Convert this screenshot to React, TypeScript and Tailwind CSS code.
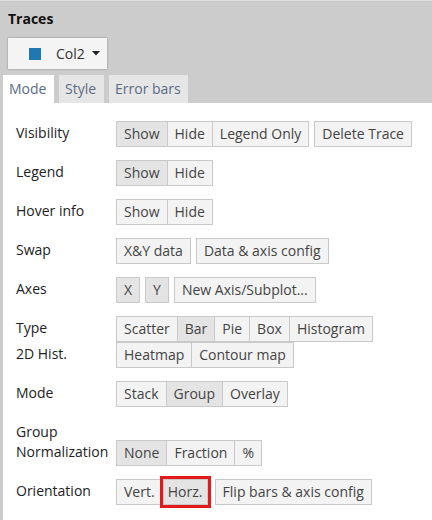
import React from "react";

type Btn = { t: string; active?: boolean };

const btnBase =
  "h-[26px] px-[7px] border border-[#c9c9c9] text-[14px] leading-[24px] text-[#444] whitespace-nowrap";

function Group({ items }: { items: Btn[] }) {
  return (
    <div className="flex">
      {items.map((b, i) => (
        <div
          key={b.t}
          className={`${btnBase} ${i > 0 ? "-ml-px" : ""} ${b.active ? "bg-[#e4e4e4]" : "bg-[#f3f3f3]"}`}
        >
          {b.t}
        </div>
      ))}
    </div>
  );
}

function Single({ t, active, className = "" }: Btn & { className?: string }) {
  return <div className={`${btnBase} ${active ? "bg-[#e4e4e4]" : "bg-[#f3f3f3]"} ${className}`}>{t}</div>;
}

function Row({ label, children, className = "" }: { label: React.ReactNode; children: React.ReactNode; className?: string }) {
  return (
    <div className={`flex items-start ${className}`}>
      <div className="w-[113px] shrink-0 pl-[13px] pt-[2px] text-[14px] leading-[20px] text-[#222]">{label}</div>
      <div className="flex items-start gap-[5px]">{children}</div>
    </div>
  );
}

export default function App() {
  return (
    <div className="w-[432px] h-[520px] bg-white overflow-hidden flex flex-col font-['Open_Sans',sans-serif]">
      <div className="border-t border-[#dedede] bg-[#cccccc] flex flex-col">
        <div className="h-[34px] flex items-center px-[8px] text-[14px] font-bold text-[#111]">Traces</div>
        <div className="mt-[3px] ml-[8px] w-[99px] h-[31px] bg-[#f4f4f4] shadow-[0_0_2px_rgba(0,0,0,0.35)] flex items-center">
          <div className="ml-[21px] w-[12px] h-[12px] bg-[#1f77b4]" />
          <span className="ml-[15px] text-[14px] text-[#333]">Col2</span>
          <svg className="ml-[7px]" width="8" height="5" viewBox="0 0 8 5">
            <polygon points="0,0 8,0 4,4.5" fill="#222" />
          </svg>
        </div>
        <div className="mt-[6px] ml-[3px] flex gap-[5px] h-[28px]">
          <div className="w-[51px] bg-white text-[14px] leading-[28px] pl-[6px] text-[#5b6b85]">Mode</div>
          <div className="w-[45px] bg-[#e6e6e6] text-[14px] leading-[28px] pl-[6px] text-[#5b6b85]">Style</div>
          <div className="w-[79px] bg-[#e6e6e6] text-[14px] leading-[28px] pl-[6px] text-[#5b6b85]">Error bars</div>
        </div>
      </div>
      <div className="flex-1 border-l-[3px] border-[#cccccc] pt-[18px] flex flex-col">
        <Row label="Visibility">
          <Group items={[{ t: "Show", active: true }, { t: "Hide" }, { t: "Legend Only" }]} />
          <Single t="Delete Trace" />
        </Row>
        <Row label="Legend" className="mt-[13px]">
          <Group items={[{ t: "Show", active: true }, { t: "Hide" }]} />
        </Row>
        <Row label="Hover info" className="mt-[13px]">
          <Group items={[{ t: "Show" }, { t: "Hide" }]} />
        </Row>
        <Row label="Swap" className="mt-[13px]">
          <Single t="X&Y data" />
          <Single t="Data & axis config" />
        </Row>
        <Row label="Axes" className="mt-[13px]">
          <Single t="X" active />
          <Single t="Y" active />
          <Single t="New Axis/Subplot..." />
        </Row>
        <Row label="Type" className="mt-[13px]">
          <Group items={[{ t: "Scatter" }, { t: "Bar", active: true }, { t: "Pie" }, { t: "Box" }, { t: "Histogram" }]} />
        </Row>
        <Row label="2D Hist.">
          <Group items={[{ t: "Heatmap" }, { t: "Contour map" }]} />
        </Row>
        <Row label="Mode" className="mt-[13px]">
          <Group items={[{ t: "Stack" }, { t: "Group", active: true }, { t: "Overlay" }]} />
        </Row>
        <Row
          label={
            <>
              Group
              <br />
              Normalization
            </>
          }
          className="mt-[13px]"
        >
          <div className="mt-[20px]">
            <Group items={[{ t: "None", active: true }, { t: "Fraction" }, { t: "%" }]} />
          </div>
        </Row>
        <Row label="Orientation" className="mt-[13px]">
          <Single t="Vert." />
          <div className="-ml-[5px] outline outline-[3px] outline-[#e3191c]">
            <Single t="Horz." active className="w-[45px] !px-0 text-center" />
          </div>
          <Single t="Flip bars & axis config" className="ml-[2px]" />
        </Row>
      </div>
    </div>
  );
}
